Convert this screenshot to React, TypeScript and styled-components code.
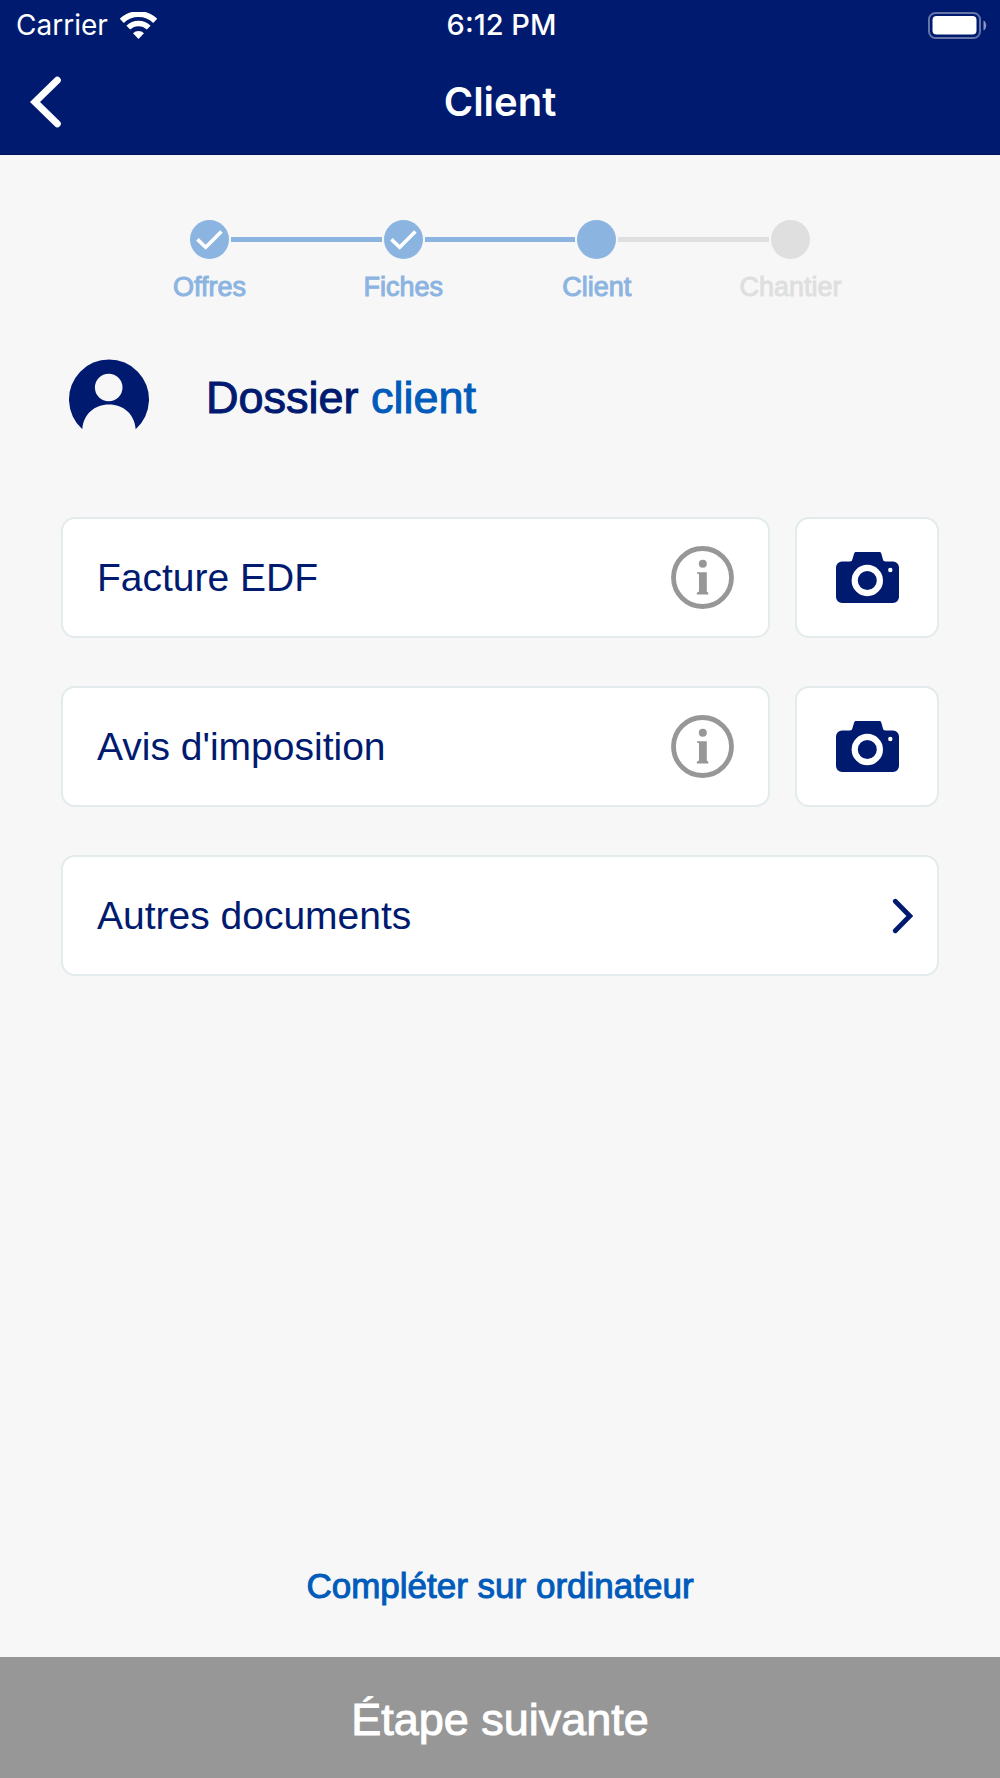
import React from "react";
import styled, { createGlobalStyle } from "styled-components";

const color = {
  navy: "#001a70",
  blue: "#005bbb",
  sky: "#8cb4e1",
  mute: "#dfdfdf",
  grey: "#979797",
  page: "#f7f7f7",
  line: "#e3ebec",
};
const helvetica = '"Helvetica Neue", "Liberation Sans", Arial, sans-serif';
const system = 'Inter, "Liberation Sans", sans-serif';

const GlobalStyle = createGlobalStyle`
  *, *::before, *::after { box-sizing: border-box; }
  body { margin: 0; background: ${color.page}; }
  button { margin: 0; padding: 0; border: 0; background: none; font: inherit; color: inherit; cursor: pointer; }
  svg { display: block; flex: none; }
`;

const Screen = styled.div`
  display: flex;
  flex-direction: column;
  min-height: 100vh;
  background: ${color.page};
  font-family: ${helvetica};
  color: ${color.navy};
`;

const Header = styled.header`
  background: ${color.navy};
  color: #fff;
  font-family: ${system};
  border-bottom: 1px solid #00135a;
`;

const StatusBar = styled.div`
  display: grid;
  grid-template-columns: 1fr auto 1fr;
  align-items: center;
  height: 50px;
  padding: 0 13px 0 16px;
  font-size: 28px;
  line-height: 34px;
`;

const Carrier = styled.div`
  display: flex;
  align-items: center;
  gap: 12px;
`;

const Clock = styled.time`
  font-size: 29px;
  font-weight: 500;
`;

const Battery = styled.div`
  justify-self: end;
`;

const NavBar = styled.div`
  display: grid;
  grid-template-columns: 1fr auto 1fr;
  align-items: center;
  height: 104px;
  padding: 0 28px;
`;

const BackButton = styled.button`
  justify-self: start;
`;

const NavTitle = styled.h1`
  margin: 0;
  font-size: 40px;
  line-height: 48px;
  font-weight: 600;
`;

const Main = styled.main`
  flex: 1;
  display: flex;
  flex-direction: column;
`;

const Steps = styled.ol`
  display: flex;
  align-items: flex-start;
  margin: 0;
  padding: 65px 19% 0;
  list-style: none;
`;

const Step = styled.li<{ $tone: string; $first?: boolean }>`
  display: flex;
  flex: ${(p) => (p.$first ? "none" : "1")};
  color: ${(p) => p.$tone};
`;

const Connector = styled.span`
  flex: 1;
  height: 5px;
  margin: 17px 2px 0;
  background: currentColor;
`;

const Marker = styled.div`
  display: flex;
  flex-direction: column;
  align-items: center;
  gap: 12px;
  width: 39px;
`;

const Dot = styled.span`
  display: grid;
  place-items: center;
  width: 39px;
  height: 39px;
  border-radius: 50%;
  background: currentColor;
`;

const StepLabel = styled.span`
  font-size: 27px;
  line-height: 32px;
  white-space: nowrap;
  -webkit-text-stroke: 1px currentColor;
`;

const Heading = styled.div`
  display: flex;
  align-items: flex-start;
  gap: 57px;
  padding: 55px 69px 0;
`;

const Title = styled.h2`
  margin: 0;
  font-size: 45px;
  line-height: 80px;
  font-weight: 400;
  -webkit-text-stroke: 1px currentColor;
`;

const Accent = styled.span`
  color: ${color.blue};
`;

const Documents = styled.ul`
  display: flex;
  flex-direction: column;
  gap: 48px;
  margin: 0;
  padding: 79px 61px 48px;
  list-style: none;
`;

const DocumentRow = styled.li`
  display: flex;
  gap: 25px;
`;

const Card = styled.div`
  display: flex;
  flex: 1;
  align-items: center;
  justify-content: space-between;
  height: 121px;
  padding: 0 34px;
  border: 2px solid ${color.line};
  border-radius: 14px;
  background: #fff;
  font-size: 39px;
  line-height: 48px;
`;

const LinkCard = styled(Card).attrs({ as: "button", type: "button" })`
  padding-right: 24px;
  font-family: inherit;
  color: inherit;
  text-align: left;
`;

const CameraButton = styled.button`
  display: grid;
  place-items: center;
  width: 144px;
  height: 121px;
  border: 2px solid ${color.line};
  border-radius: 14px;
  background: #fff;
`;

const DesktopLink = styled.a`
  align-self: center;
  margin-top: auto;
  padding-bottom: 50px;
  color: ${color.blue};
  font-size: 35px;
  line-height: 42px;
  text-decoration: none;
  -webkit-text-stroke: 1px currentColor;
`;

const NextButton = styled.button`
  && {
    height: 121px;
    padding-top: 4px;
    background: ${color.grey};
    color: #fff;
    font-size: 45px;
    line-height: 52px;
    -webkit-text-stroke: 1px currentColor;
  }
`;

const WifiIcon = () => (
  <svg width="37" height="27" viewBox="0 0 37 27" fill="none" stroke="#fff" aria-hidden="true">
    <path d="M1.800 8.800a24.200 24.200 0 0 1 33.400 0" strokeWidth="5.800" />
    <path d="M8.300 15.600a14.600 14.600 0 0 1 20.400 0" strokeWidth="5.400" />
    <path d="M18.500 27l-5.500-5.800a7.800 7.800 0 0 1 11 0z" fill="#fff" stroke="none" />
  </svg>
);

const BatteryIcon = () => (
  <svg width="59" height="27" viewBox="0 0 59 27" role="img" aria-label="Batterie pleine">
    <rect x="1" y="1" width="51" height="25" rx="6.5" fill="none" stroke="#6675a8" strokeWidth="2" />
    <rect x="4.5" y="4" width="44" height="18.5" rx="4" fill="#fff" />
    <path d="M55.5 8.5c3.6 1.4 3.6 8.600 0 10z" fill="#8a96bd" />
  </svg>
);

const BackIcon = () => (
  <svg width="36" height="54" viewBox="0 0 36 54" fill="none" stroke="#fff" strokeWidth="7" strokeLinecap="round" aria-hidden="true">
    <path d="M29.300 5.200L7 27l22.300 21.800" />
  </svg>
);

const CheckIcon = () => (
  <svg width="27" height="21" viewBox="0 0 27 21" fill="none" stroke="#fff" strokeWidth="3.600" aria-hidden="true">
    <path d="M1.400 10.400L9.700 18.200L25.400 2.500" />
  </svg>
);

const AvatarIcon = () => (
  <svg width="80" height="72" viewBox="0 0 80 72" aria-hidden="true">
    <path
      d="M13.300 71.200A40 40 0 1 1 66.700 71.200C65.500 56 54.500 46.500 40 46.500S14.500 56 13.300 71.200z"
      fill={color.navy}
    />
    <circle cx="39.700" cy="29.500" r="13.800" fill={color.page} />
  </svg>
);

const InfoIcon = () => (
  <svg width="63" height="63" viewBox="0 0 63 63" fill={color.grey} aria-hidden="true">
    <circle cx="31.500" cy="31.500" r="29" fill="none" stroke={color.grey} strokeWidth="4.800" />
    <circle cx="31.800" cy="17.800" r="4" />
    <path d="M26 26.200h9.800v19.300l1.500 1.200v1.800H25.800v-1.800l2.200-1.200V28.200l-2-.8z" />
  </svg>
);

const CameraIcon = () => (
  <svg width="63" height="51" viewBox="0 0 63 51" fill={color.navy} aria-hidden="true">
    <path d="M6 9.500h7.500c2 0 2.600-.8 3-2.500l1.600-5.400C18.500.5 19 0 20 0h23.500c1 0 1.500.5 1.800 1.600L46.800 7c.4 1.700 1 2.500 3 2.500H57a6 6 0 0 1 6 6V45a6 6 0 0 1-6 6H6a6 6 0 0 1-6-6V15.500a6 6 0 0 1 6-6z" />
    <circle cx="31.300" cy="28.500" r="12.600" fill="none" stroke="#fff" strokeWidth="6.200" />
    <circle cx="54.300" cy="18" r="2.200" fill="#fff" />
  </svg>
);

const ForwardIcon = () => (
  <svg width="21" height="36" viewBox="0 0 21 36" fill="none" stroke={color.navy} strokeWidth="4.800" strokeLinecap="round" aria-hidden="true">
    <path d="M3.300 3.300l14.500 14.700L3.300 32.700" />
  </svg>
);

type StepState = "done" | "current" | "todo";

const steps: { label: string; state: StepState }[] = [
  { label: "Offres", state: "done" },
  { label: "Fiches", state: "done" },
  { label: "Client", state: "current" },
  { label: "Chantier", state: "todo" },
];

const scannable = ["Facture EDF", "Avis d'imposition"];

export default function App() {
  return (
    <Screen>
      <GlobalStyle />
      <Header>
        <StatusBar>
          <Carrier>
            Carrier
            <WifiIcon />
          </Carrier>
          <Clock>6:12 PM</Clock>
          <Battery>
            <BatteryIcon />
          </Battery>
        </StatusBar>
        <NavBar>
          <BackButton type="button" aria-label="Retour">
            <BackIcon />
          </BackButton>
          <NavTitle>Client</NavTitle>
        </NavBar>
      </Header>

      <Main>
        <Steps>
          {steps.map(({ label, state }, index) => (
            <Step
              key={label}
              $tone={state === "todo" ? color.mute : color.sky}
              $first={index === 0}
              aria-current={state === "current" ? "step" : undefined}
            >
              {index > 0 && <Connector />}
              <Marker>
                <Dot>{state === "done" && <CheckIcon />}</Dot>
                <StepLabel>{label}</StepLabel>
              </Marker>
            </Step>
          ))}
        </Steps>

        <Heading>
          <AvatarIcon />
          <Title>
            Dossier <Accent>client</Accent>
          </Title>
        </Heading>

        <Documents>
          {scannable.map((name) => (
            <DocumentRow key={name}>
              <Card>
                {name}
                <button type="button" aria-label={`Informations : ${name}`}>
                  <InfoIcon />
                </button>
              </Card>
              <CameraButton type="button" aria-label={`Photographier : ${name}`}>
                <CameraIcon />
              </CameraButton>
            </DocumentRow>
          ))}
          <DocumentRow>
            <LinkCard>
              Autres documents
              <ForwardIcon />
            </LinkCard>
          </DocumentRow>
        </Documents>

        <DesktopLink href="#ordinateur">Compléter sur ordinateur</DesktopLink>
      </Main>

      <NextButton type="button">Étape suivante</NextButton>
    </Screen>
  );
}
